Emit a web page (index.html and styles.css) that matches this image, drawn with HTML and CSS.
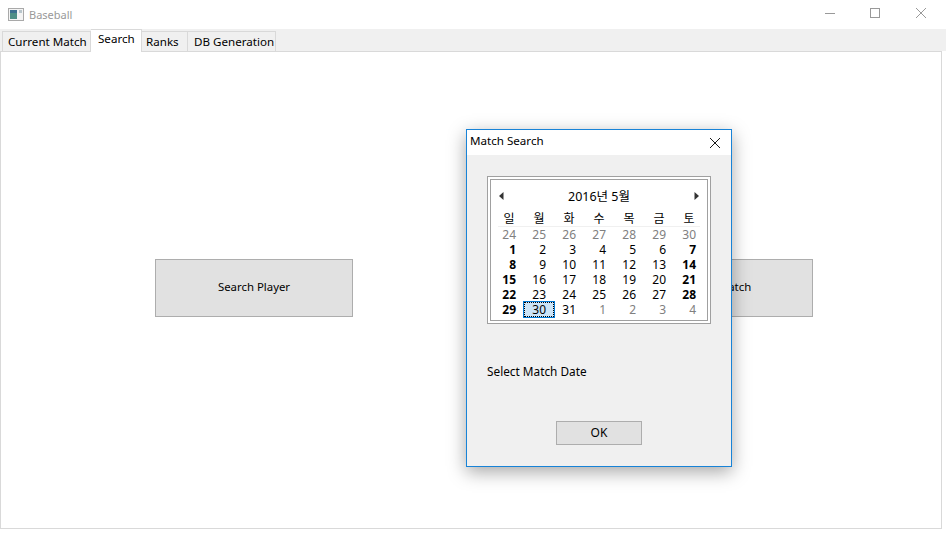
FILE: index.html
```html
<!DOCTYPE html>
<html lang="ko">

<head>
  <meta charset="UTF-8">
  <title>Baseball</title>
  <link rel="stylesheet" href="styles.css">
</head>

<body>
  <div class="titlebar">
    <svg class="app-icon" width="16" height="14" viewBox="0 0 16 14">
      <rect x="0.5" y="0.5" width="15" height="12" fill="#f4f4f4" stroke="#a9a9a9" />
      <rect x="2" y="2" width="7" height="9" fill="#4f8f86" />
      <rect x="2" y="2" width="7" height="3" fill="#3d6f8f" />
      <rect x="11" y="2" width="3" height="3" fill="#b9c6cc" />
    </svg>
    <span class="app-title">Baseball</span>
    <div class="win-buttons">
      <svg width="46" height="29" viewBox="0 0 46 29">
        <path d="M19 13.5H29" stroke="#999" fill="none" />
      </svg>
      <svg width="46" height="29" viewBox="0 0 46 29">
        <rect x="18.5" y="8.5" width="9" height="9" stroke="#999" fill="none" />
      </svg>
      <svg width="46" height="29" viewBox="0 0 46 29">
        <path d="M18 8L28 18M28 8L18 18" stroke="#999" fill="none" />
      </svg>
    </div>
  </div>

  <div class="tabstrip">
    <div class="tab tab-first">Current Match</div>
    <div class="tab tab-active">Search</div>
    <div class="tab tab-ranks">Ranks</div>
    <div class="tab tab-db">DB Generation</div>
  </div>

  <div class="pane">
    <button class="big-button">Search Player</button>
    <button class="big-button match-button">Search Match</button>
  </div>

  <!-- Modal dialog floating over the main window -->
  <div class="dialog">
    <div class="dialog-title">
      <span>Match Search</span>
      <svg width="12" height="12" viewBox="0 0 12 12">
        <path d="M1 1L11 11M11 1L1 11" stroke="#1a1a1a" fill="none" />
      </svg>
    </div>
    <div class="dialog-body">
      <div class="calendar">
        <div class="cal-inner">
          <div class="cal-header">
            <svg width="5" height="8" viewBox="0 0 5 8"><path d="M4.5 0V8L0 4Z" fill="#333" /></svg>
            <span class="cal-month">2016년 5월</span>
            <svg width="5" height="8" viewBox="0 0 5 8"><path d="M0.5 0V8L5 4Z" fill="#333" /></svg>
          </div>
          <div class="cal-weekdays">
            <span>일</span><span>월</span><span>화</span><span>수</span><span>목</span><span>금</span><span>토</span>
          </div>
          <div class="cal-rule"></div>
          <div class="cal-days">
            <span class="other">24</span><span class="other">25</span><span class="other">26</span><span class="other">27</span><span class="other">28</span><span class="other">29</span><span class="other">30</span>
            <span class="bold">1</span><span>2</span><span>3</span><span>4</span><span>5</span><span>6</span><span class="bold">7</span>
            <span class="bold">8</span><span>9</span><span>10</span><span>11</span><span>12</span><span>13</span><span class="bold">14</span>
            <span class="bold">15</span><span>16</span><span>17</span><span>18</span><span>19</span><span>20</span><span class="bold">21</span>
            <span class="bold">22</span><span>23</span><span>24</span><span>25</span><span>26</span><span>27</span><span class="bold">28</span>
            <span class="bold">29</span><span class="today">30</span><span>31</span><span class="other">1</span><span class="other">2</span><span class="other">3</span><span class="other">4</span>
          </div>
        </div>
      </div>
      <div class="cal-label">Select Match Date</div>
      <button class="ok-button">OK</button>
    </div>
  </div>
</body>

</html>
```

FILE: styles.css
```css
html,
body {
  margin: 0;
  height: 100%;
}

body {
  width: 946px;
  height: 533px;
  overflow: hidden;
  background-color: #fff;
  font-family: "Noto Sans", "Noto Sans CJK KR", sans-serif;
  font-size: 11.6px;
  color: #000;
}

/* Window title bar */
.titlebar {
  display: flex;
  align-items: center;
  height: 29px;
  padding-left: 8px;
}

.app-title {
  margin-left: 5px;
  font-size: 11px;
  color: #999;
}

.win-buttons {
  display: flex;
  margin-left: auto;
  margin-right: 2px;
}

.win-buttons svg {
  display: block;
}

/* Tabs */
.tabstrip {
  display: flex;
  align-items: flex-end;
  height: 22px;
  padding-left: 2px;
  background-color: #f0f0f0;
}

.tab {
  box-sizing: border-box;
  height: 20px;
  border: 1px solid #d9d9d9;
  border-bottom: none;
  border-left: none;
  line-height: 19px;
  background-color: #f0f0f0;
  white-space: nowrap;
}

.tab-first {
  width: 89px;
  padding-left: 5px;
  border-left: 1px solid #d9d9d9;
}

.tab-active {
  position: relative;
  width: 51px;
  height: 23px;
  margin-bottom: -1px;
  padding-left: 7px;
  line-height: 18px;
  background-color: #fff;
}

.tab-ranks {
  width: 46px;
  padding-left: 4px;
}

.tab-db {
  width: 88px;
  padding-left: 6px;
}

/* Main pane */
.pane {
  box-sizing: border-box;
  display: flex;
  align-items: flex-start;
  gap: 264px;
  width: 942px;
  height: 478px;
  padding: 207px 0 0 154px;
  border: 1px solid #d9d9d9;
  background-color: #fff;
}

.big-button {
  box-sizing: border-box;
  width: 198px;
  height: 58px;
  padding: 0 0 3px;
  border: 1px solid #adadad;
  background-color: #e1e1e1;
  font-family: inherit;
  font-size: 11.4px;
  color: #000;
}

.match-button {
  width: 196px;
}

/* Dialog */
.dialog {
  position: absolute;
  left: 466px;
  top: 129px;
  box-sizing: border-box;
  display: flex;
  flex-direction: column;
  width: 266px;
  height: 338px;
  border: 1px solid #1883d7;
  background-color: #f0f0f0;
  box-shadow: 0 5px 17px rgba(0, 0, 0, 0.35);
}

.dialog-title {
  box-sizing: border-box;
  display: flex;
  align-items: center;
  justify-content: space-between;
  height: 25px;
  padding: 0 10px 4px 3px;
  background-color: #fff;
}

.dialog-title svg {
  margin-top: 4px;
}

.dialog-body {
  display: flex;
  flex-direction: column;
  padding: 21px 20px 0;
}

.calendar {
  box-sizing: border-box;
  width: 224px;
  height: 148px;
  padding: 2px;
  border: 1px solid #a0a0a0;
  background-color: #fff;
}

.cal-inner {
  box-sizing: border-box;
  height: 100%;
  padding: 0 1px 0 3px;
  border: 1px solid #a0a0a0;
}

.cal-header {
  box-sizing: border-box;
  display: flex;
  align-items: center;
  justify-content: space-between;
  height: 30px;
  padding: 1px 7px 0 5px;
}

.cal-month {
  font-size: 12.5px;
}

.cal-weekdays {
  display: grid;
  grid-template-columns: repeat(7, 30px);
  height: 16px;
  font-size: 12px;
  line-height: 17px;
  text-align: center;
}

.cal-rule {
  width: 202px;
  height: 1px;
  margin-left: 4px;
  background-color: #f0f0f0;
}

.cal-days {
  display: grid;
  grid-template-columns: repeat(7, 30px);
  grid-auto-rows: 15px;
  font-size: 12px;
  line-height: 15px;
  text-align: right;
}

.cal-days span {
  box-sizing: border-box;
  padding-right: 8px;
}

.cal-days .other {
  color: #808080;
}

.cal-days .bold {
  font-weight: 700;
}

.cal-days .today {
  border: 1px dotted #000;
  outline: 1px solid #0078d7;
  background-color: #cce4f7;
  padding-right: 7px;
  line-height: 13px;
}

.cal-label {
  margin-top: 39px;
  font-size: 11.8px;
  line-height: 16px;
}

.ok-button {
  box-sizing: border-box;
  align-self: center;
  width: 86px;
  height: 24px;
  margin-top: 42px;
  padding: 0 0 2px;
  border: 1px solid #adadad;
  background-color: #e1e1e1;
  font-family: inherit;
  font-size: 12px;
  color: #000;
}
```
